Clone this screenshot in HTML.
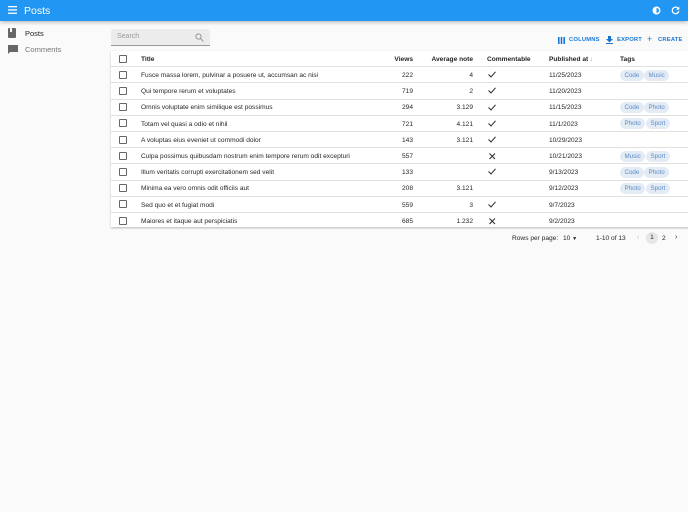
<!DOCTYPE html>
<html><head><meta charset="utf-8"><style>
*{margin:0;padding:0;box-sizing:border-box}
body{width:688px;height:512px;background:#fafafa;font-family:"Liberation Sans",sans-serif;position:relative;overflow:hidden;color:rgba(0,0,0,.87)}
.bar{position:absolute;left:0;top:0;width:688px;height:21px;background:#2196f3;box-shadow:0 1px 4px rgba(0,0,0,.3)}
.bar .t{position:absolute;left:24px;top:5px;color:#fff;font-size:10.5px}
.a{position:absolute;white-space:nowrap}
.side{font-size:7.5px}
.search{position:absolute;left:111px;top:29px;width:99px;height:17px;background:#ececec;border-bottom:1px solid #999;border-radius:3px 3px 0 0}
.table{position:absolute;left:111px;top:51px;width:577px;height:176px;background:#fff;box-shadow:0 1px 2px rgba(0,0,0,.25)}
.row{position:absolute;left:0;width:577px;height:16.2px;border-bottom:1px solid #e0e0e0;font-size:6.6px}
.row span{position:absolute;top:4.8px;white-space:nowrap}
.cb{position:absolute;left:8px;top:3.5px;width:8px;height:8px;border:1.2px solid #666;border-radius:1px}
.r{text-align:right}
.chip{position:absolute;top:2.5px;height:11px;line-height:11px;padding:0 4.5px;border-radius:6px;background:#e3ebf5;color:#5b8bc7;font-size:6.2px}
.btn{position:absolute;top:37px;font-size:5.8px;color:#1976d2;font-weight:bold;letter-spacing:.2px}
.h{font-weight:bold}
</style></head><body>
<div class="bar">
<svg style="position:absolute;left:8px;top:6px" width="9" height="8"><rect y="0" width="9" height="1.3" fill="#fff"/><rect y="3.3" width="9" height="1.3" fill="#fff"/><rect y="6.6" width="9" height="1.3" fill="#fff"/></svg>
<div class="t">Posts</div>
<svg style="position:absolute;left:652px;top:6px" width="9" height="9"><circle cx="4.5" cy="4.5" r="4" fill="#fff"/><path d="M4.5 2a2.5 2.5 0 0 1 0 5z" fill="#2196f3"/></svg>
<svg style="position:absolute;left:671px;top:6px" width="9" height="9"><path d="M7 2.2A3.3 3.3 0 1 0 7.8 5" stroke="#fff" stroke-width="1.3" fill="none"/><path d="M8.3 0.5v3.2H5.1z" fill="#fff"/></svg>
</div>
<svg style="position:absolute;left:8px;top:28px" width="9" height="10"><rect x="0" y="0" width="8" height="10" rx="1" fill="#666"/><rect x="2" y="0" width="2" height="4" fill="#fafafa"/></svg>
<div class="a side" style="left:25px;top:29px;color:#222">Posts</div>
<svg style="position:absolute;left:8px;top:45px" width="10" height="10"><path d="M0 0h10v7H2l-2 2z" fill="#666"/></svg>
<div class="a side" style="left:25px;top:45px;color:#777">Comments</div>
<div class="search"><span class="a" style="left:6px;top:4px;font-size:7px;color:#999">Search</span>
<svg style="position:absolute;left:84px;top:4px" width="9" height="9"><circle cx="3.5" cy="3.5" r="2.6" stroke="#999" stroke-width="1" fill="none"/><path d="M5.5 5.5L8.5 8.5" stroke="#999" stroke-width="1.1"/></svg></div>
<svg style="position:absolute;left:558px;top:37px" width="7" height="7"><rect x="0" width="1.6" height="7" fill="#1976d2"/><rect x="2.7" width="1.6" height="7" fill="#1976d2"/><rect x="5.4" width="1.6" height="7" fill="#1976d2"/></svg>
<div class="btn" style="left:569px">COLUMNS</div>
<svg style="position:absolute;left:606px;top:36px" width="7" height="8"><path d="M2 0h3v3h2L3.5 6.5 0 3h2z" fill="#1976d2"/><rect y="7" width="7" height="1" fill="#1976d2"/></svg>
<div class="btn" style="left:617px">EXPORT</div>
<div class="btn" style="left:647px;font-size:9px;top:34px;font-weight:normal">+</div>
<div class="btn" style="left:658px">CREATE</div>
<div class="table">
<div class="row" style="top:0"><div class="cb"></div><span class="h" style="left:30px">Title</span><span class="h r" style="right:275px">Views</span><span class="h r" style="right:215px">Average note</span><span class="h" style="left:376px">Commentable</span><span class="h" style="left:438px">Published at <span style="position:static;color:#999">↓</span></span><span class="h" style="left:509px">Tags</span></div>
</div>
<div class="a" style="left:512px;top:235px;font-size:6.6px">Rows per page:</div>
<div class="a" style="left:563px;top:235px;font-size:6.6px">10 <span style="font-size:5px">▼</span></div>
<div class="a" style="left:596px;top:235px;font-size:6.6px">1-10 of 13</div>
<div class="a" style="left:637px;top:234px;font-size:7px;color:#bbb">‹</div>
<div class="a" style="left:646px;top:232px;width:12px;height:12px;border-radius:6px;background:#e6e6e6;font-size:6.6px;text-align:center;line-height:12px">1</div>
<div class="a" style="left:662px;top:235px;font-size:6.6px">2</div>
<div class="a" style="left:675px;top:234px;font-size:7px">›</div>
<script>
var d=[["Fusce massa lorem, pulvinar a posuere ut, accumsan ac nisi",222,"4","v","11/25/2023",["Code","Music"]],
["Qui tempore rerum et voluptates",719,"2","v","11/20/2023",[]],
["Omnis voluptate enim similique est possimus",294,"3.129","v","11/15/2023",["Code","Photo"]],
["Totam vel quasi a odio et nihil",721,"4.121","v","11/1/2023",["Photo","Sport"]],
["A voluptas eius eveniet ut commodi dolor",143,"3.121","v","10/29/2023",[]],
["Culpa possimus quibusdam nostrum enim tempore rerum odit excepturi",557,"","x","10/21/2023",["Music","Sport"]],
["Illum veritatis corrupti exercitationem sed velit",133,"","v","9/13/2023",["Code","Photo"]],
["Minima ea vero omnis odit officiis aut",208,"3.121","","9/12/2023",["Photo","Sport"]],
["Sed quo et et fugiat modi",559,"3","v","9/7/2023",[]],
["Maiores et itaque aut perspiciatis",685,"1.232","x","9/2/2023",[]]];
var h="";
d.forEach(function(r,i){
var t=16.2*(i+1);
var ic=r[3]=="v"?'<svg style="position:absolute;left:377px;top:4px" width="8" height="7"><path d="M0.5 3.5L3 6 7.5 0.8" stroke="#333" stroke-width="1.1" fill="none"/></svg>':r[3]=="x"?'<svg style="position:absolute;left:378px;top:4.5px" width="7" height="7"><path d="M0.5 0.5L6 6M6 0.5L0.5 6" stroke="#333" stroke-width="1.1"/></svg>':"";
var c="";var x=509;r[5].forEach(function(g){c+='<div class="chip" style="left:'+x+'px">'+g+'</div>';x+=(g=="Code"?24:26)});
h+='<div class="row" style="top:'+t+'px"><div class="cb"></div><span style="left:30px">'+r[0]+'</span><span class="r" style="right:275px">'+r[1]+'</span><span class="r" style="right:215px">'+r[2]+'</span>'+ic+'<span style="left:438px">'+r[4]+'</span>'+c+'</div>';
});
document.querySelector(".table").insertAdjacentHTML("beforeend",h);
</script>
</body></html>
